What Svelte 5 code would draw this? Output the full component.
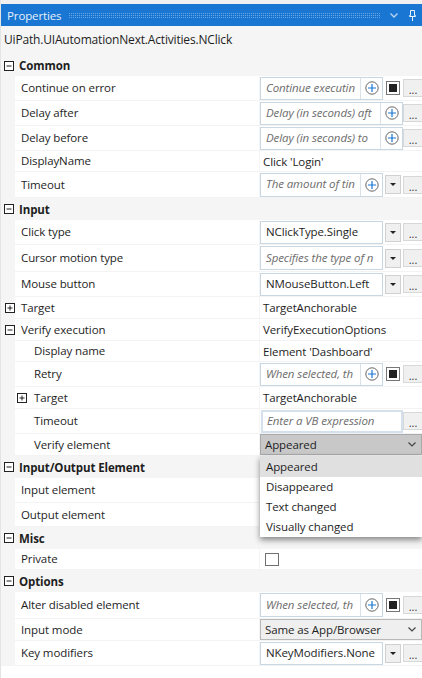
<script>
  const rows = [
    { h: 21, head: 'Common' },
    { h: 25, label: 'Continue on error', v: 'expr', ph: 'Continue executin', square: true },
    { h: 25, label: 'Delay after', v: 'expr', ph: 'Delay (in seconds) aft', wide: true },
    { h: 25, label: 'Delay before', v: 'expr', ph: 'Delay (in seconds) to', wide: true },
    { h: 21, label: 'DisplayName', v: 'text', text: "Click 'Login'" },
    { h: 26, label: 'Timeout', v: 'expr', ph: 'The amount of tin', arrow: true },
    { h: 22, head: 'Input' },
    { h: 25, label: 'Click type', v: 'val', text: 'NClickType.Single' },
    { h: 27, label: 'Cursor motion type', v: 'val', ph: 'Specifies the type of n' },
    { h: 25, label: 'Mouse button', v: 'val', text: 'NMouseButton.Left' },
    { h: 22, label: 'Target', v: 'text', text: 'TargetAnchorable', tog: 'plus' },
    { h: 22, label: 'Verify execution', v: 'text', text: 'VerifyExecutionOptions', tog: 'minus' },
    { h: 21, label: 'Display name', sub: true, v: 'text', text: "Element 'Dashboard'" },
    { h: 25, label: 'Retry', sub: true, v: 'expr', ph: 'When selected, th', square: true },
    { h: 22, label: 'Target', sub: true, v: 'text', text: 'TargetAnchorable', tog: 'plus' },
    { h: 25, label: 'Timeout', sub: true, v: 'vb', ph: 'Enter a VB expression' },
    { h: 22, label: 'Verify element', sub: true, v: 'combo', text: 'Appeared', open: true },
    { h: 22, head: 'Input/Output Element' },
    { h: 25, label: 'Input element', v: 'none' },
    { h: 24, label: 'Output element', v: 'none' },
    { h: 22, head: 'Misc' },
    { h: 21, label: 'Private', v: 'check' },
    { h: 22, head: 'Options' },
    { h: 27, label: 'Alter disabled element', v: 'expr', ph: 'When selected, th', square: true },
    { h: 22, label: 'Input mode', v: 'combo', text: 'Same as App/Browser' },
    { h: 25, label: 'Key modifiers', v: 'val', text: 'NKeyModifiers.None' }
  ];
  const options = ['Appeared', 'Disappeared', 'Text changed', 'Visually changed'];
</script>

{#snippet toggle(kind)}
  <svg class="toggle" width="10" height="10" viewBox="0 0 10 10">
    <rect x="0.5" y="0.5" width="9" height="9" fill="#fff" stroke="#222" />
    <path d="M2.5 5h5" stroke="#222" />
    {#if kind === 'plus'}<path d="M5 2.5v5" stroke="#222" />{/if}
  </svg>
{/snippet}

{#snippet plus()}
  <svg class="plus" width="14" height="14" viewBox="0 0 14 14">
    <circle cx="7" cy="7" r="6.2" fill="#fff" stroke="#666" />
    <path d="M7 3v8M3 7h8" stroke="#1976d2" stroke-width="1.2" />
  </svg>
{/snippet}

{#snippet chevron()}
  <svg class="chev" width="8" height="5" viewBox="0 0 8 5">
    <path d="M0.5 0.5L4 4l3.5-3.5" fill="none" stroke="#444" stroke-width="1.2" />
  </svg>
{/snippet}

<div class="panel">
  <header class="title">
    <span class="title-text">Properties</span>
    <span class="dots"></span>
    <svg class="title-chev" width="8" height="5" viewBox="0 0 8 5">
      <path d="M0.5 0.5L4 4l3.5-3.5" fill="none" stroke="#bcd6f2" stroke-width="1.3" />
    </svg>
    <svg class="pin" width="8" height="11" viewBox="0 0 8 11">
      <path d="M1.5 0.5h4v5h1v1h-6v-1h1z" fill="none" stroke="#e6f0fb" />
      <path d="M3 7h1v4H3z" fill="#e6f0fb" />
    </svg>
  </header>
  <div class="type-name">UiPath.UIAutomationNext.Activities.NClick</div>

  <div class="grid">
    {#each rows as r}
      {#if r.head}
        <div class="head" style="height:{r.h}px">
          <span class="gut">{@render toggle('minus')}</span>
          <span class="head-text">{r.head}</span>
        </div>
      {:else}
        <div class="row" style="height:{r.h}px">
          <span class="gut item">{#if r.tog && !r.sub}{@render toggle(r.tog)}{/if}</span>
          <div class="name" class:sub={r.sub}>
            {#if r.tog && r.sub}<span class="subtog">{@render toggle(r.tog)}</span>{/if}
            {r.label}
          </div>
          <div class="value">
            {#if r.v === 'text'}
              <span class="plain">{r.text}</span>
            {:else if r.v === 'expr'}
              <div class="box" class:wide={r.wide}>
                <span class="input ph">{r.ph}</span>
                <span class="pluscell">{@render plus()}</span>
              </div>
              {#if r.square}
                <span class="square"></span>
              {:else if r.arrow}
                <span class="arrow"></span>
              {/if}
              <span class="more">...</span>
            {:else if r.v === 'val'}
              <div class="box">
                <span class="input" class:ph={r.ph}>{r.ph ?? r.text}</span>
              </div>
              <span class="arrow"></span>
              <span class="more">...</span>
            {:else if r.v === 'vb'}
              <div class="box wide vb"><span class="input ph">{r.ph}</span></div>
              <span class="more">...</span>
            {:else if r.v === 'combo'}
              <div class="combo" class:open={r.open}>
                <span>{r.text}</span>
                {@render chevron()}
              </div>
              {#if r.open}
                <ul class="menu">
                  {#each options as o, i}
                    <li class:on={i === 0}>{o}</li>
                  {/each}
                </ul>
              {/if}
            {:else if r.v === 'check'}
              <span class="check"></span>
            {/if}
          </div>
        </div>
      {/if}
    {/each}
  </div>
</div>

<style>
  :global(body) {
    margin: 0;
    background: #fff;
  }
  .panel {
    width: 422px;
    height: 678px;
    overflow: hidden;
    background: #fff;
    font-family: "Open Sans", "Noto Sans", sans-serif;
    font-size: 11.5px;
    letter-spacing: -0.1px;
    color: #1e1e1e;
    box-sizing: border-box;
    border-left: 1px solid #e4e4e4;
  }
  .title {
    height: 22px;
    margin-top: 4px;
    background: #1976d2;
    color: #e6f0fb;
    display: flex;
    align-items: center;
    padding-left: 6px;
    padding-right: 5px;
    position: relative;
  }
  .panel::before {
    content: "";
    display: block;
    height: 4px;
    margin-bottom: -4px;
    background: #f0f0f0;
  }
  .title-text {
    font-size: 11.5px;
    letter-spacing: -0.12px;
  }
  .dots {
    flex: 1;
    height: 5px;
    margin: 0 9px 0 8px;
    background-image: radial-gradient(circle at 0.5px 0.5px, #6aa6e6 0.6px, transparent 0.7px);
    background-size: 2px 2px;
  }
  .title-chev {
    margin-right: 11px;
  }
  .type-name {
    height: 29px;
    box-sizing: border-box;
    padding: 5px 0 0 3px;
    font-size: 12px;
    letter-spacing: -0.18px;
    background: #f5f5f5;
  }
  .grid {
    display: flex;
    flex-direction: column;
    background: #f5f5f5;
  }
  .head {
    display: flex;
    align-items: center;
    box-sizing: border-box;
    font-weight: 700;
    flex: none;
  }
  .gut {
    width: 14px;
    flex: none;
    display: flex;
    padding-left: 3px;
    box-sizing: border-box;
    align-items: center;
  }
  .gut.item {
    padding-left: 4px;
  }
  .toggle {
    display: block;
  }
  .head-text {
    padding-left: 4px;
  }
  .row {
    display: flex;
    flex: none;
    position: relative;
  }
  .name {
    width: 245px;
    flex: none;
    background: #fff;
    border-bottom: 1px solid #f3f3f3;
    box-sizing: border-box;
    padding: 0 0 1px 6px;
    display: flex;
    align-items: center;
    position: relative;
  }
  .name.sub {
    padding-left: 19px;
  }
  .subtog {
    position: absolute;
    left: 2px;
    top: 6px;
    display: block;
  }
  .value {
    flex: 1;
    min-width: 0;
    background: #fff;
    border-bottom: 1px solid #f3f3f3;
    border-left: 1px solid #f5f5f5;
    margin-left: -1px;
    box-sizing: border-box;
    display: flex;
    align-items: center;
    position: relative;
  }
  .plain {
    padding-left: 3px;
  }
  .box {
    width: 123px;
    height: calc(100% - 1px);
    max-height: 24px;
    box-sizing: border-box;
    border: 1px solid #c9d7e2;
    display: flex;
    align-items: center;
    flex: none;
    background: #fff;
    overflow: hidden;
  }
  .box.wide {
    width: 143px;
  }
  .box.vb {
    width: 142px;
    height: 23px;
    margin-left: 1px;
    border: 2px solid #d4e1ed;
  }
  .input {
    flex: 1;
    min-width: 0;
    padding: 0 0 2px 5px;
    white-space: nowrap;
    overflow: hidden;
    text-overflow: clip;
  }
  .vb .input {
    padding-left: 4px;
  }
  .ph {
    font-style: italic;
    color: #6c6c6c;
  }
  .pluscell {
    width: 21px;
    height: 100%;
    flex: none;
    border-left: 1px solid #d9e2e9;
    display: flex;
    align-items: center;
    justify-content: center;
  }
  .plus {
    display: block;
  }
  .square {
    width: 12px;
    height: 12px;
    border: 1px solid #777;
    margin: 0 3px;
    box-sizing: content-box;
    background: #222;
    box-shadow: inset 0 0 0 2px #fff;
    flex: none;
  }
  .arrow {
    width: 16px;
    height: 19px;
    box-sizing: border-box;
    margin: 0 2px;
    border: 1px solid #d0d0d0;
    background: #f0f0f0;
    flex: none;
    position: relative;
  }
  .arrow::after {
    content: "";
    position: absolute;
    left: 4px;
    top: 7px;
    border-left: 3px solid transparent;
    border-right: 3px solid transparent;
    border-top: 3px solid #222;
  }
  .more {
    width: 19px;
    height: 18px;
    box-sizing: border-box;
    background: #f0f0f0;
    border: 1px solid #d8d8d8;
    border-right: 0;
    flex: none;
    text-align: center;
    line-height: 20px;
    font-size: 11px;
    color: #333;
  }
  .combo {
    position: absolute;
    left: 0;
    right: 0;
    top: 0;
    bottom: 0;
    box-sizing: border-box;
    border: 1px solid #b8b8b8;
    background: #efefef;
    display: flex;
    align-items: center;
    justify-content: space-between;
    padding: 0 5px 0 4px;
  }
  .combo.open {
    background: #c8c8c8;
    border-color: #aaa;
  }
  .menu {
    position: absolute;
    left: 0;
    right: 0;
    top: 22px;
    margin: 0;
    padding: 0;
    list-style: none;
    background: #fff;
    box-shadow: 0 3px 6px rgba(0, 0, 0, 0.45);
    z-index: 5;
    height: 81px;
  }
  .menu li {
    height: 20px;
    line-height: 20px;
    padding-left: 6px;
  }
  .menu li.on {
    height: 21px;
    line-height: 21px;
    background: #e0e0e0;
  }
  .check {
    width: 14px;
    height: 13px;
    box-sizing: border-box;
    border: 1px solid #707070;
    margin-left: 5px;
  }
</style>
